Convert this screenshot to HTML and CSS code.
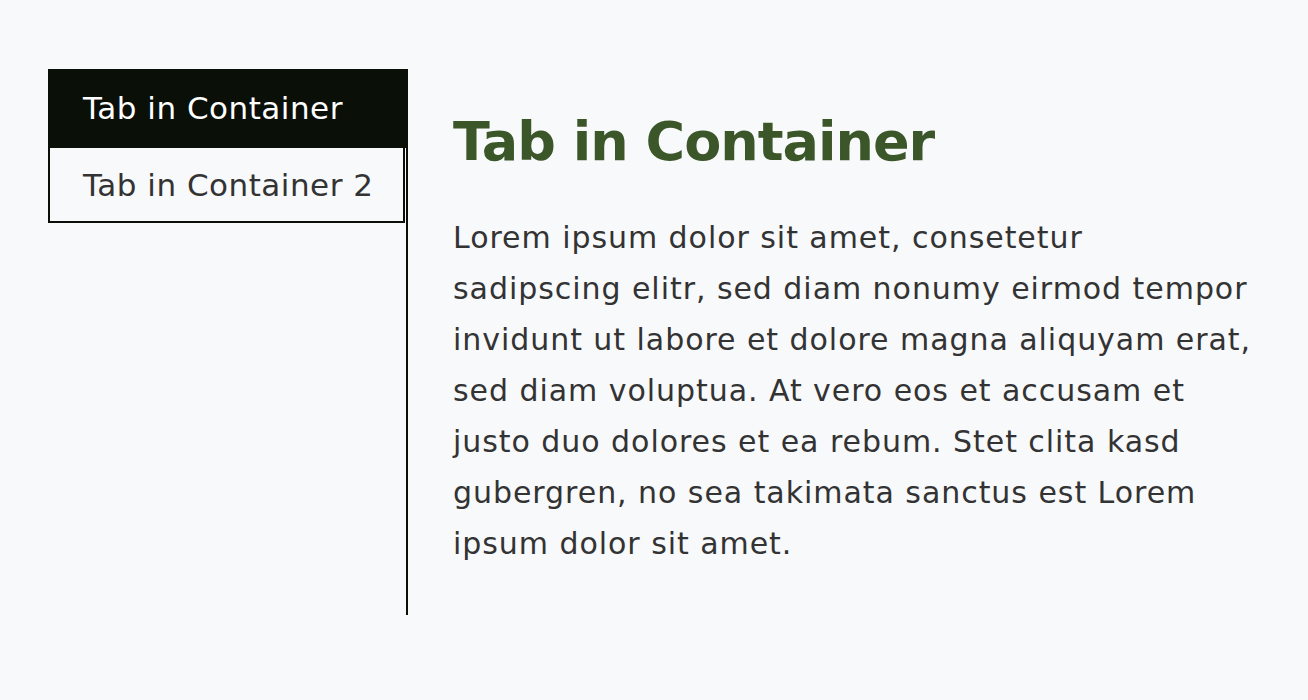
FILE: index.html
```html
<!DOCTYPE html>
<html lang="en">
<head>
<meta charset="utf-8">
<title>Tabs</title>
<link rel="stylesheet" href="styles.css">
</head>
<body>
<div class="tabs">
  <div class="tab-list">
    <div class="tab active">Tab in Container</div>
    <div class="tab">Tab in Container 2</div>
  </div>
  <div class="tab-panel">
    <h2 class="panel-title">Tab in Container</h2>
    <p class="panel-text">Lorem ipsum dolor sit amet, consetetur sadipscing elitr, sed diam nonumy eirmod tempor invidunt ut labore et dolore magna aliquyam erat, sed diam voluptua. At vero eos et accusam et justo duo dolores et ea rebum. Stet clita kasd gubergren, no sea takimata sanctus est Lorem ipsum dolor sit amet.</p>
  </div>
</div>
</body>
</html>
```
FILE: styles.css
```css
html, body {
  margin: 0;
  padding: 0;
  background: #f8f9fb;
}
body {
  font-family: "DejaVu Sans", sans-serif;
  color: #333333;
}
.tabs {
  display: flex;
  padding: 69px 48px 0 48px;
  height: 546px;
}
.tab-list {
  width: 358px;
  flex: none;
  border-right: 2px solid #0a0f08;
  display: flex;
  flex-direction: column;
}
.tab {
  font-size: 31px;
  letter-spacing: 0.5px;
  line-height: 40px;
  padding: 17px 10px 16px 33px;
  border: 2px solid #0a0f08;
  border-top: none;
  margin-right: 1px;
  color: #333333;
  white-space: nowrap;
}
.tab.active {
  background: #0a0f08;
  color: #ffffff;
  border: none;
  margin-right: -2px;
  padding: 19px 10px 20px 35px;
}
.tab-panel {
  flex: 1;
  padding-left: 45px;
}
.panel-title {
  margin: 40px 0 0 0;
  font-size: 54px;
  letter-spacing: -1px;
  line-height: 66px;
  font-weight: 700;
  color: #3b5629;
}
.panel-text {
  margin: 37px 0 0 0;
  font-size: 30px;
  letter-spacing: 0.95px;
  line-height: 51px;
}
```
